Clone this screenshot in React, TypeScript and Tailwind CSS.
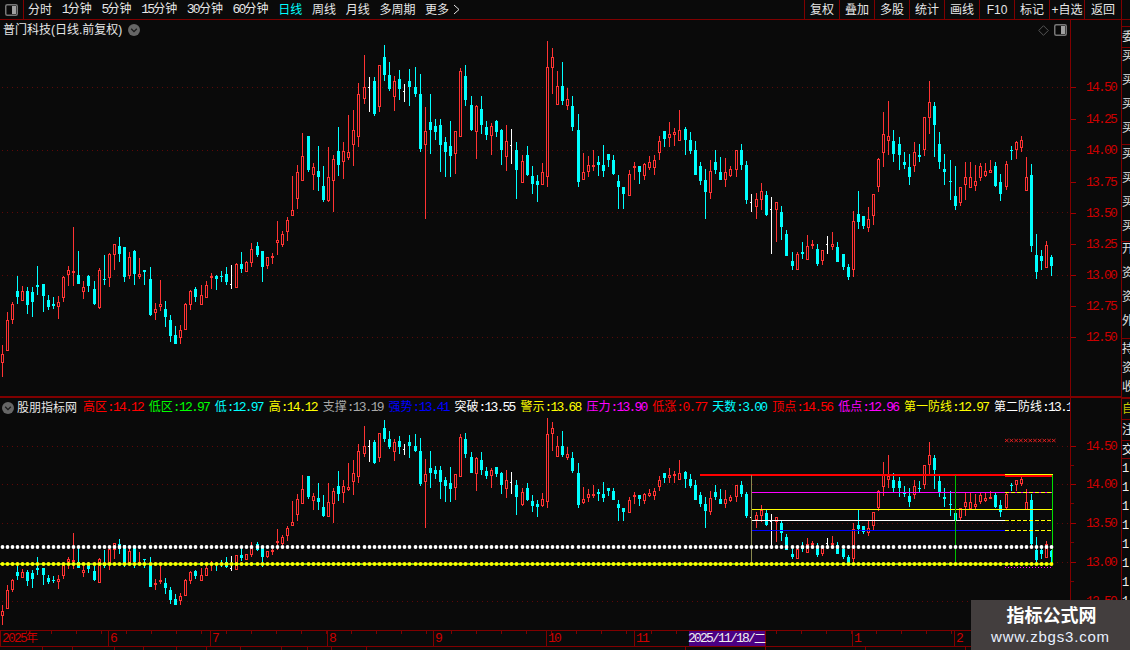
import React from "react";

type Candle = { x: number; hi: number; top: number; bot: number; lo: number; kind: string };

// raw readings per stretch of the chart: color + high,top,bottom,low in crop pixels
const stretchA =
  "r375,403,428,470 r277,300,392,392 r247,252,299,312 c168,213,231,252 r198,213,242,242 c201,213,255,282 c201,216,246,290 c138,195,201,225 c192,192,228,276 c225,240,261,270 c231,252,258,267 r228,247,261,296 r168,171,234,246 r138,151,164,198 r21,153,159,198 c93,165,192,192 r183,202,216,237 c165,168,198,216 c183,207,252,255 r144,151,264,267 c105,177,180,195 r99,102,173,201 r72,72,105,150 c51,78,102,126 c81,81,171,186 r96,111,168,177 c90,93,162,195 r114,163,171,177 c150,150,156,195 c141,177,285,288 r249,268,278,300 r180,252,261,273 c243,267,291,321 c285,300,348,366 c318,345,372,372 r315,331,354,372 r249,252,329,329 r210,213,255,270 c201,207,231,246 r195,226,255,255 r183,195,234,234 r159,168,174,207 c165,168,177,210 c153,168,171,186 c141,162,186,195 w135,192,195,207 r129,132,204,204 c96,132,147,159 r123,126,156,156 r69,87,129,141 c66,78,105,111 c93,93,141,186 r111,111,138,147 r99,108,114,132 r3,60,69,105 r33,42,75,81 r-9,0,36,63 r-132,-30,-12,-12 r-165,-144,-63,-33";
const stretchB =
  "r310,378,452,452 c318,318,420,426 r400,412,436,480 c348,423,441,483 c408,468,510,516 r351,441,513,516 r375,387,452,546 c291,363,405,438 r336,363,397,447 r255,367,384,390 r240,301,344,408 r159,192,320,351 r75,171,208,222 w141,171,174,246 c141,153,252,258 r105,106,230,246 c45,81,135,153 c96,135,177,183 r138,153,200,243 c120,147,177,210 w162,183,186,216 c117,153,171,228 c111,171,192,201 c132,192,357,366 r231,304,344,567 c192,276,300,372 c267,288,306,330 c267,285,345,426 c321,336,366,441 c273,348,378,441 r304,304,373,432 r114,124,322,322 c105,138,210,228 c198,225,300,303 r225,228,307,387 c198,237,285,312 c273,291,315,330 r279,289,317,375 c270,273,306,321 c297,300,360,405 r285,334,380,423 w297,345,348,402 c336,360,420,507 r375,394,458,460 c348,375,435,438 c408,438,462,492 c435,453,465,516 r399,427,464,465 r33,112,440,471 r54,81,113,192 r123,169,224,225 c96,168,213,225 r174,207,227,240 c198,228,291,303 c252,300,456,471 r369,427,449,450 r378,405,425,441 r360,405,411,423 c378,396,405,438";
const stretchC =
  "c225,285,303,321 c252,252,270,291 c255,270,312,315 c315,333,351,417 c351,351,372,417 r300,312,377,377 r276,288,294,330 c288,288,306,342 r279,283,317,330 r258,277,294,300 r255,270,294,315 r198,213,249,270 c183,183,207,231 r156,192,204,231 r174,186,195,228 r120,180,213,213 c171,177,210,255 c186,210,243,252 c213,240,315,315 c276,288,333,345 c297,330,366,447 r270,304,369,387 c240,276,300,312 c261,306,330,330 r264,306,330,351 r288,297,318,321 r240,240,299,321 c222,240,285,300 c273,285,390,402 w372,396,399,426 r369,387,411,447 r339,363,390,420 c363,375,435,438 w381,417,420,552 r396,396,420,516 c408,426,471,510 c480,492,558,558 c546,573,588,600 r546,552,600,600 c516,546,552,567 r495,528,570,570 r510,522,528,537 c522,537,582,588 r540,540,573,585 w498,522,525,552 r486,522,531,540 c516,531,576,576 c552,552,591,600 c582,591,621,630 r423,453,600,621 c363,432,456,477 c438,438,468,477 r411,447,474,486 r373,373,438,465 r264,267,351,366 r126,192,249,291 r93,198,213,255 c180,213,252,276 c201,222,255,300 c246,276,285,297 c252,291,321,345 r216,246,288,306 c222,255,261,276 r141,141,240,258 r33,96,144,192 c96,108,165,261 c186,222,276,297 c252,297,306,345 c270,333,336,390 c288,378,408,420 r351,351,399,408 r276,321,345,390 r276,321,354,354 r285,333,348,363 r279,288,324,333 r279,303,318,321 r270,300,309,309 c276,288,348,351 c312,336,372,393 r273,282,351,360 c228,240,243,270 r213,216,240,267 r198,210,234,246 r261,321,362,362 c282,315,528,546 c492,555,606,627 c540,558,573,600 r513,525,594,594 c555,561,588,618";

const parse = (raw: string, off: number) =>
  raw.split(" ").map((s) => {
    const [hi, top, bot, lo] = s.slice(1).split(",").map((n) => Number(n) / 3 + off);
    return { kind: s[0], hi, top, bot, lo };
  });

const candles: Candle[] = [...parse(stretchA, 220), ...parse(stretchB, 30), ...parse(stretchC, 70)].map((c, i) => ({
  ...c,
  x: Math.floor(2.33 + 5.095 * i),
}));

const RED = "#ff3333";
const CYAN = "#00ffff";

const toLower = (y: number) => 562.5 + (y - 275.5) * 0.617;

function Candles({ map }: { map: (y: number) => number }) {
  return (
    <g shapeRendering="crispEdges">
      {candles.map((c, i) => {
        const hi = Math.round(map(c.hi));
        const lo = Math.round(map(c.lo));
        const top = Math.round(map(c.top));
        const bot = Math.max(Math.round(map(c.bot)), top + 1);
        if (c.kind === "w") {
          return (
            <g key={i} fill="#ffffff">
              <rect x={c.x} y={hi} width={1} height={Math.max(lo - hi, 1)} />
              <rect x={c.x - 1} y={top} width={1} height={1} />
            </g>
          );
        }
        if (c.kind === "c") {
          return (
            <g key={i} fill={CYAN}>
              <rect x={c.x} y={hi} width={1} height={Math.max(lo - hi, 1)} />
              <rect x={c.x - 1} y={top} width={3} height={bot - top} />
            </g>
          );
        }
        return (
          <g key={i}>
            <rect x={c.x} y={hi} width={1} height={Math.max(top - hi, 0)} fill={RED} />
            <rect x={c.x} y={bot} width={1} height={Math.max(lo - bot, 0)} fill={RED} />
            <rect x={c.x - 0.5} y={top + 0.5} width={2} height={Math.max(bot - top - 1, 1)} fill="#0a0a0a" stroke={RED} />
          </g>
        );
      })}
    </g>
  );
}

function Grid({ ys }: { ys: number[] }) {
  return (
    <g>
      {ys.map((y) => (
        <line key={y} x1={2} x2={1068} y1={y + 0.5} y2={y + 0.5} stroke="#5e0808" strokeDasharray="1 4" />
      ))}
    </g>
  );
}

function Overlays() {
  const dots = candles.map((c) => c.x + 0.5);
  return (
    <g>
      <g shapeRendering="crispEdges">
        <rect x={700} y={474} width={305} height={2} fill="#ff0000" />
        <rect x={1005} y={474} width={48} height={3} fill="#ff0000" />
        <rect x={1005} y={474} width={48} height={1} fill="#ffff00" />
        <rect x={752} y={492} width={300} height={1} fill="#ff00ff" />
        <rect x={752} y={509} width={300} height={1} fill="#ffff00" />
        <rect x={752} y={520} width={253} height={1} fill="#ffffff" />
        <rect x={752} y={530} width={253} height={1} fill="#0000ff" />
        <line x1={1005} x2={1053} y1={492.5} y2={492.5} stroke="#ffff00" strokeDasharray="4 2" />
        <line x1={1005} x2={1053} y1={520.5} y2={520.5} stroke="#ffff00" strokeDasharray="4 2" />
        <line x1={1005} x2={1053} y1={530.5} y2={530.5} stroke="#ffff00" strokeDasharray="4 2" />
        <rect x={751} y={475} width={1} height={89} fill="#8a8a50" />
        <rect x={955} y={475} width={1} height={89} fill="#00c000" />
        <rect x={1052} y={475} width={1} height={89} fill="#00e000" />
        <rect x={0} y={563} width={1053} height={2} fill="#80d000" />
        <line x1={1005} x2={1053} y1={567} y2={567} stroke="#ff00ff" strokeDasharray="1 2" />
      </g>
      {dots.map((x) => (
        <circle key={x} cx={x} cy={547} r={1.9} fill="#ffffff" />
      ))}
      {dots.map((x) => (
        <circle key={x} cx={x} cy={564} r={1.9} fill="#ffff00" />
      ))}
      <g stroke="#f02020" strokeWidth={0.9}>
        {Array.from({ length: 11 }, (_, i) => 1005 + i * 4.7).map((x) => (
          <g key={x}>
            <line x1={x} x2={x + 3.5} y1={439} y2={442} />
            <line x1={x} x2={x + 3.5} y1={442} y2={439} />
          </g>
        ))}
      </g>
    </g>
  );
}

function Num({ children, className = "" }: { children: React.ReactNode; className?: string }) {
  return <span className={`font-['Liberation_Mono'] text-[13px] tracking-[-1.8px] ${className}`}>{children}</span>;
}

function CircleChevron() {
  return (
    <svg width="12" height="12" viewBox="0 0 12 12" className="shrink-0">
      <circle cx="6" cy="6" r="6" fill="#666666" />
      <path d="M3.2 4.8 6 7.6 8.8 4.8" fill="none" stroke="#1a1a1a" strokeWidth="1.3" />
    </svg>
  );
}

function PanelIcon() {
  return (
    <svg width="13" height="12" viewBox="0 0 13 12">
      <rect x="0.75" y="0.75" width="11.5" height="10.5" rx="1.5" fill="none" stroke="#777777" strokeWidth="1.5" />
      <rect x="7" y="2" width="4" height="8" fill="#a0a0a0" />
    </svg>
  );
}

const tabs = [
  { label: "分时" },
  { n: "1", label: "分钟" },
  { n: "5", label: "分钟" },
  { n: "15", label: "分钟" },
  { n: "30", label: "分钟" },
  { n: "60", label: "分钟" },
  { label: "日线", active: true },
  { label: "周线" },
  { label: "月线" },
  { label: "多周期" },
];

const actions = ["复权", "叠加", "多股", "统计", "画线", "F10", "标记", "+自选"];

const legend = [
  { label: "高区", value: "14.12", color: "text-[#ff0000]" },
  { label: "低区", value: "12.97", color: "text-[#00ff00]" },
  { label: "低", value: "12.97", color: "text-[#00ffff]" },
  { label: "高", value: "14.12", color: "text-[#ffff00]" },
  { label: "支撑", value: "13.19", color: "text-[#a8a8a8]" },
  { label: "强势", value: "13.41", color: "text-[#0000ff]" },
  { label: "突破", value: "13.55", color: "text-white" },
  { label: "警示", value: "13.68", color: "text-[#ffff00]" },
  { label: "压力", value: "13.90", color: "text-[#ff00ff]" },
  { label: "低涨", value: "0.77", color: "text-[#ff0000]" },
  { label: "天数", value: "3.00", color: "text-[#00ffff]" },
  { label: "顶点", value: "14.56", color: "text-[#ff0000]" },
  { label: "低点", value: "12.96", color: "text-[#ff00ff]" },
  { label: "第一防线", value: "12.97", color: "text-[#ffff00]" },
  { label: "第二防线", value: "13.19", color: "text-white" },
];

const upperScale = [
  ["14.50", 87],
  ["14.25", 119],
  ["14.00", 150],
  ["13.75", 182],
  ["13.50", 213],
  ["13.25", 244],
  ["13.00", 275],
  ["12.75", 306],
  ["12.50", 337],
] as const;

const lowerScale = [
  ["14.50", 446],
  ["14.00", 484],
  ["13.50", 523],
  ["13.00", 562],
  ["12.50", 601],
] as const;

function Scale({ marks, offset, minor }: { marks: readonly (readonly [string, number])[]; offset: number; minor?: boolean }) {
  return (
    <div className="relative w-[51px] border-l border-[#800000]">
      {marks.map(([label, y]) => (
        <React.Fragment key={label}>
          <div className="absolute left-0 w-[5px] h-px bg-[#a00000]" style={{ top: y - offset }} />
          {minor && <div className="absolute left-0 w-[3px] h-px bg-[#800000]" style={{ top: y - offset + 19 }} />}
          <div className="absolute left-[15px] h-[14px] leading-[14px] text-[#cc0000]" style={{ top: y - offset - 7 }}>
            <Num>{label}</Num>
          </div>
        </React.Fragment>
      ))}
    </div>
  );
}

const months = [
  ["2025年", 0],
  ["6", 108],
  ["7", 210],
  ["8", 327],
  ["9", 433],
  ["10", 546],
  ["11", 634],
  ["1", 852],
  ["2", 954],
] as const;

const footerTabs = [43, 30, 42, 29, 33, 30, 34, 41, 26, 24, 35, 319, 80, 100, 100, 100];

const sideUpper: { chars: string[]; rowClass: string }[] = [
  { chars: ["委"], rowClass: "h-[20px] pt-[4px]" },
  { chars: ["买", "买", "买", "买"], rowClass: "h-[24px] pt-[2px]" },
  { chars: ["买", "买", "买", "买"], rowClass: "h-[24px] pt-[3px]" },
  { chars: ["开", "资", "资", "外"], rowClass: "h-[24px] pt-[1px]" },
  { chars: ["持", "资", "收"], rowClass: "h-[19px] pt-[4px]" },
];

export default function App() {
  return (
    <div className="relative w-[1130px] h-[650px] overflow-hidden bg-[#0a0a0a] text-[12px] text-[#e6e6e6] font-['Liberation_Sans','Noto_Sans_CJK_SC',sans-serif]">
      {/* top toolbar */}
      <div className="flex h-[20px] items-stretch border-b border-[#800000]">
        <div className="flex w-[24px] items-center justify-center border-r border-[#800000]">
          <PanelIcon />
        </div>
        <div className="flex flex-1 items-center gap-[9.7px] pl-[4px]">
          {tabs.map((t) => (
            <span key={(t.n ?? "") + t.label} className={t.active ? "text-[#00ffff]" : ""}>
              {t.n && <Num className="text-[12px] tracking-[-1.2px]">{t.n}</Num>}
              {t.label}
            </span>
          ))}
          <span className="flex items-center gap-[4px]">
            更多
            <svg width="7" height="11" viewBox="0 0 7 11">
              <path d="M1 1 6 5.5 1 10" fill="none" stroke="#e6e6e6" />
            </svg>
          </span>
        </div>
        <div className="flex">
          {actions.map((a) => (
            <div key={a} className="flex w-[35px] items-center justify-center border-l border-[#800000] whitespace-nowrap">
              {a}
            </div>
          ))}
          <div className="flex w-[38px] items-center justify-center border-x border-[#800000]">返回</div>
        </div>
        <div className="w-[8px]" />
      </div>

      <div className="flex h-[630px]">
        <div className="flex w-[1121px] flex-col">
          {/* price pane */}
          <div className="flex h-[378px] border-b-2 border-[#800000]">
            <div className="relative w-[1070px]">
              <svg width="1070" height="376" viewBox="0 20 1070 376" className="block">
                <Grid ys={[87, 150, 212, 275, 337]} />
                <Candles map={(y) => y} />
              </svg>
              <div className="absolute left-[3px] top-0 flex h-[19px] items-center gap-[6px]">
                <span>普门科技(日线.前复权)</span>
                <CircleChevron />
              </div>
              <div className="absolute right-[3px] top-[4px] flex items-center gap-[5px]">
                <svg width="11" height="11" viewBox="0 0 11 11">
                  <path d="M5.5 0.7 10.3 5.5 5.5 10.3 0.7 5.5Z" fill="none" stroke="#555555" />
                </svg>
                <PanelIcon />
              </div>
            </div>
            <Scale marks={upperScale} offset={20} />
          </div>

          {/* indicator pane */}
          <div className="flex h-[232px]">
            <div className="relative w-[1070px]">
              <svg width="1070" height="232" viewBox="0 398 1070 232" className="block">
                <Grid ys={[446, 484, 523, 562, 601]} />
                <Candles map={toLower} />
                <Overlays />
              </svg>
              <div className="absolute left-0 top-0 flex h-[20px] w-[1070px] items-center gap-[5.9px] overflow-hidden whitespace-nowrap">
                <div className="flex items-center gap-[3px] pl-[2px]">
                  <CircleChevron />
                  <span className="text-[#e6e6e6]">股朋指标网</span>
                </div>
                {legend.map((l) => (
                  <span key={l.label} className={`${l.color} shrink-0`}>
                    {l.label}
                    <Num>:{l.value}</Num>
                  </span>
                ))}
              </div>
            </div>
            <Scale marks={lowerScale} offset={398} minor />
          </div>

          {/* date axis */}
          <div className="relative h-[17px] border-y border-[#800000] text-[#cc0000]">
            {months.map(([label, x]) => (
              <div key={label} className="absolute top-0 h-[15px] border-l border-[#800000] pl-[1px] leading-[15px]" style={{ left: x }}>
                <Num>{label.replace("年", "")}</Num>
                {label.includes("年") && "年"}
              </div>
            ))}
            {Array.from({ length: 42 }, (_, i) => 26 + i * 25).map((x) => (
              <div key={x} className="absolute top-0 h-[3px] w-px bg-[#800000]" style={{ left: x }} />
            ))}
            <div className="absolute left-[689px] top-0 flex h-[15px] w-[77px] items-center justify-center border-r border-[#800000] bg-[#4b0082] text-[#f0f0f0]">
              <Num>2025/11/18/</Num>二
            </div>
          </div>

          {/* cut-off tab strip */}
          <div className="flex h-[3px] overflow-hidden">
            {footerTabs.map((w, i) => (
              <div key={i} className="h-full shrink-0 border-r border-[#800000]" style={{ width: w }} />
            ))}
          </div>
        </div>

        {/* side list, cut by the window edge */}
        <div className="w-[9px] overflow-hidden border-l border-[#800000] pt-[6px] leading-none">
          <div className="h-[371px]">
            {sideUpper.map((g, i) => (
              <div key={i} className="border-t border-[#800000]">
                {g.chars.map((c, j) => (
                  <div key={j} className={`${g.rowClass} w-[14px] whitespace-nowrap text-[#e0e0e0]`}>
                    {c}
                  </div>
                ))}
              </div>
            ))}
          </div>
          <div className="border-t-2 border-[#800000]">
            <div className="flex h-[21px] items-center border-b border-[#800000] text-[#c8c800]">自</div>
            <div className="flex h-[21px] items-center border-b border-[#800000]">注</div>
            <div className="flex h-[18px] items-center border-b border-[#800000]">交</div>
            {Array.from({ length: 9 }, (_, i) => (
              <div key={i} className="flex h-[19px] items-center font-['Liberation_Mono'] text-[#f0f0f0]">
                1
              </div>
            ))}
          </div>
        </div>
      </div>

      {/* site watermark */}
      <div className="absolute left-[971px] top-[600px] flex h-[50px] w-[159px] flex-col items-center justify-center bg-[#433e3e] text-white">
        <span className="text-[18px] font-bold leading-[24px] pl-[2px]">指标公式网</span>
        <span className="text-[15px] leading-[18px] tracking-[0.8px] text-[#e8f0ff]">www.zbgs3.com</span>
      </div>
    </div>
  );
}
